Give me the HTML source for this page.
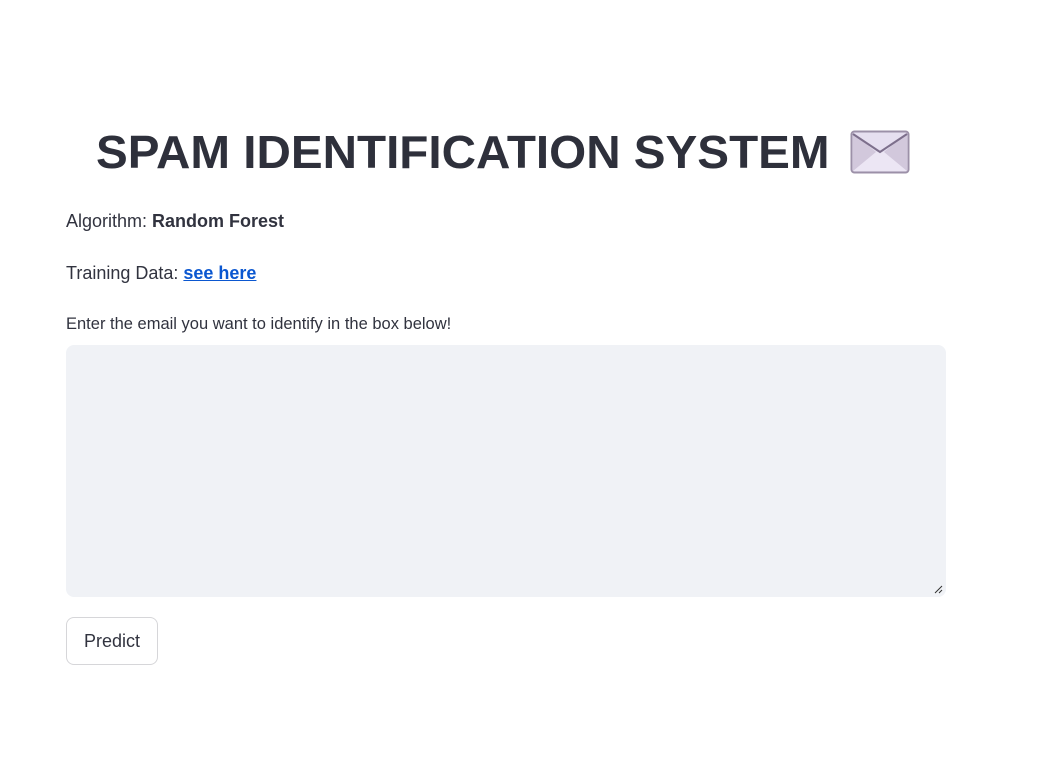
<!DOCTYPE html>
<html><head><style>
body{margin:0;background:#fff;font-family:"Liberation Sans",sans-serif;color:#31333f;width:1040px;height:763px;overflow:hidden;position:relative}
.t{position:absolute;left:96px;top:124px;font-size:46px;font-weight:bold;color:#2e303b;white-space:nowrap;transform-origin:left top;transform:scaleX(1.035);line-height:56px}
.p{position:absolute;left:66px;font-size:18px;white-space:nowrap}
a{color:#0b57d0;font-weight:bold;text-decoration:underline}
.box{position:absolute;left:66px;top:345px;width:880px;height:252px;background:#f0f2f6;border-radius:8px}
.btn{position:absolute;left:66px;top:617px;border:1px solid #d6d6d9;border-radius:8px;font-size:18px;display:flex;align-items:center;justify-content:center;box-sizing:border-box;width:92px;height:48px}
</style></head><body>
<div class="t">SPAM IDENTIFICATION SYSTEM</div>
<svg style="position:absolute;left:850px;top:130px" width="60" height="44" viewBox="0 0 60 44">
<rect x="1.5" y="1.5" width="57" height="41" rx="3" fill="#e6dff0" stroke="#9c90a8" stroke-width="2"/>
<path d="M3 41 L25 22 L35 22 L57 41 Z" fill="#ece6f4"/>
<path d="M3 3 L26 22 L3 41Z M57 3 L34 22 L57 41Z" fill="#d2c8dc"/>
<path d="M3 4 L30 22 L57 4" fill="none" stroke="#7d6f8c" stroke-width="2"/>
</svg>
<div class="p" style="top:211px">Algorithm: <b>Random Forest</b></div>
<div class="p" style="top:263px">Training Data: <a>see here</a></div>
<div class="p" style="top:315px;font-size:16.5px">Enter the email you want to identify in the box below!</div>
<div class="box"><svg style="position:absolute;right:3px;bottom:3px" width="9" height="9"><path d="M1 8 L8 1 M5 8 L8 5" stroke="#333" stroke-width="1"/></svg></div>
<div class="btn">Predict</div>
</body></html>
